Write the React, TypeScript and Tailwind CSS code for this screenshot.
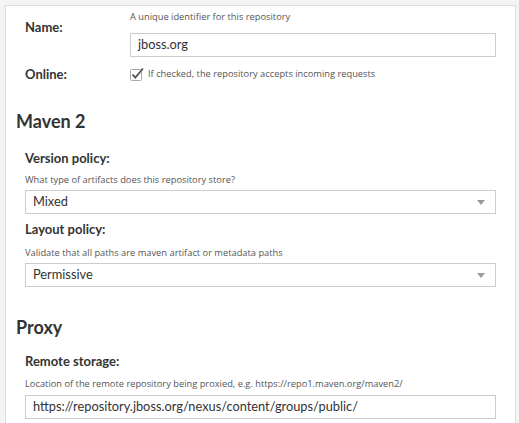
import React from 'react';

const labelCls = "text-[13px] leading-[16px] font-bold text-[#333]";
const helpCls = "text-[9.3px] leading-[12px] text-[#555] [font-family:'Open_Sans',sans-serif]";
const headCls = "pl-[10px] text-[18px] font-bold leading-[22px] text-[#333]";
const boxCls =
  "box-border flex h-[24px] w-full items-center border border-[#ccc] bg-white px-[7px] text-[12.8px] text-[#333]";

function Caret() {
  return (
    <svg width="8" height="5" viewBox="0 0 8 5" className="ml-auto mr-[3px]">
      <path d="M0 0h8L4 5z" fill="#999" />
    </svg>
  );
}

function Check() {
  return (
    <svg width="15" height="15" viewBox="0 0 15 15" className="flex-none">
      <rect x="0.5" y="2.5" width="11" height="11" rx="1" fill="#fff" stroke="#aaa" />
      <path d="M2.5 7.5l2.8 3.2L13 1.5" fill="none" stroke="#555" strokeWidth="1.8" />
    </svg>
  );
}

export default function App() {
  return (
    <div className="h-screen overflow-hidden bg-[#f4f4f4] pl-[5px] pr-[3px] pt-[5px] [font-family:Lato,'Open_Sans',sans-serif]">
      <div className="h-[440px] border border-[#ddd] bg-white">
        <div className="flex pl-[19px] pr-[19px] pt-[5px]">
          <div className={labelCls + ' w-[105px] flex-none pt-[8px]'}>Name:</div>
          <div className="flex flex-1 flex-col">
            <div className={helpCls}>A unique identifier for this repository</div>
            <div className={boxCls + ' mt-[10px]'}>jboss.org</div>
          </div>
        </div>
        <div className="mt-[9px] flex items-center pl-[19px]">
          <div className={labelCls + ' w-[105px] flex-none'}>Online:</div>
          <Check />
          <span className={helpCls + ' ml-[3px]'}>If checked, the repository accepts incoming requests</span>
        </div>

        <div className={headCls + ' mt-[28px]'}>Maven 2</div>
        <div className="pl-[19px] pr-[19px]">
          <div className={labelCls + ' mt-[18px]'}>Version policy:</div>
          <div className={helpCls + ' mt-[8px]'}>What type of artifacts does this repository store?</div>
          <div className={boxCls + ' mt-[4px]'}>
            Mixed
            <Caret />
          </div>
          <div className={labelCls + ' mt-[7px]'}>Layout policy:</div>
          <div className={helpCls + ' mt-[10px]'}>Validate that all paths are maven artifact or metadata paths</div>
          <div className={boxCls + ' mt-[4px]'}>
            Permissive
            <Caret />
          </div>
        </div>

        <div className={headCls + ' mt-[29px]'}>Proxy</div>
        <div className="pl-[19px] pr-[19px]">
          <div className={labelCls + ' mt-[15px]'}>Remote storage:</div>
          <div className={helpCls + ' mt-[9px]'}>
            Location of the remote repository being proxied, e.g. https://repo1.maven.org/maven2/
          </div>
          <div className={boxCls + ' mt-[5px]'}>https://repository.jboss.org/nexus/content/groups/public/</div>
        </div>
      </div>
    </div>
  );
}
